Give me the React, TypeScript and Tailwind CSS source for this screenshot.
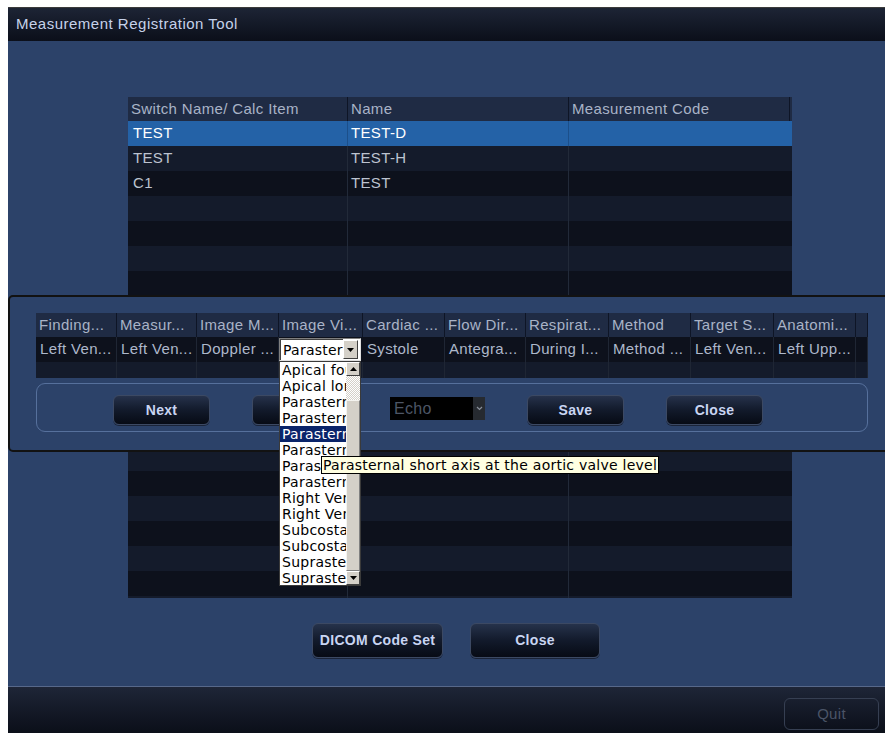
import React from "react";

const mainRows: string[][] = [
  ["TEST", "TEST-D", ""],
  ["TEST", "TEST-H", ""],
  ["C1", "TEST", ""],
];

const codeCols = [
  { w: 81, head: "Finding...", val: "Left Ven..." },
  { w: 80, head: "Measur...", val: "Left Ven..." },
  { w: 82, head: "Image M...", val: "Doppler ..." },
  { w: 84, head: "Image Vi...", val: "" },
  { w: 82, head: "Cardiac ...", val: "Systole" },
  { w: 81, head: "Flow Dir...", val: "Antegra..." },
  { w: 83, head: "Respirat...", val: "During I..." },
  { w: 82, head: "Method", val: "Method ..." },
  { w: 83, head: "Target S...", val: "Left Ven..." },
  { w: 82, head: "Anatomi...", val: "Left Upp..." },
  { w: 12, head: "", val: "" },
];

const views = [
  "Apical four chamber",
  "Apical long axis",
  "Parasternal long axis",
  "Parasternal long axis of right ventricular inflow",
  "Parasternal short axis at the aortic valve level",
  "Parasternal short axis at the mitral valve level",
  "Parasternal short axis at the papillary muscle level",
  "Parasternal short axis at the apical level",
  "Right Ventricular inflow",
  "Right Ventricular outflow",
  "Subcostal four chamber",
  "Subcostal short axis",
  "Suprasternal long axis",
  "Suprasternal short axis",
];

function DarkButton({ label, w, h }: { label: string; w: string; h: string }) {
  return (
    <div
      className={`${w} ${h} flex items-center justify-center rounded-[6px] border border-[#3c4963] bg-gradient-to-b from-[#26324b] via-[#121a2b] to-[#070b15] shadow-[0_1px_0_#1a2439] text-[14px] font-bold tracking-[0.3px] text-[#c9d5f2]`}
    >
      {label}
    </div>
  );
}

function ViewCombo() {
  return (
    <div className="relative h-[24px] w-[82px] mt-[1px]">
      {/* closed combo */}
      <div className="flex h-[23px] w-[82px] items-center border border-[#7f7f7f] border-r-[#e0e0e0] border-b-[#e0e0e0] bg-white">
        <div className="flex h-full flex-1 items-center overflow-hidden whitespace-nowrap border-l border-t border-[#404040] pl-[2px] font-['DejaVu_Sans',Verdana,sans-serif] text-[14px] tracking-[0.25px] text-black">
          Parasternal short axis
        </div>
        <div className="flex h-[19px] w-[15px] items-center justify-center border border-white border-r-[#404040] border-b-[#404040] bg-[#d4d0c8] mr-[2px]">
          <svg width="7" height="4" viewBox="0 0 7 4">
            <path d="M0 0h7L3.5 4z" fill="#000" />
          </svg>
        </div>
      </div>
      {/* open list */}
      <div className="absolute left-0 top-[23px] z-20 flex h-[225px] w-[82px] border border-[#3a3a3a] bg-white">
        <div className="flex w-[66px] flex-col overflow-hidden">
          {views.map((v, i) => (
            <div
              key={i}
              className={`h-[16px] whitespace-nowrap pl-[2px] font-['DejaVu_Sans',Verdana,sans-serif] text-[14px] leading-[16px] tracking-[0.25px] ${
                i === 4 ? "bg-[#0a246a] text-white" : "text-black"
              }`}
            >
              {v}
            </div>
          ))}
        </div>
        <div className="flex w-[14px] flex-col bg-[#d4d0c8]">
          <div className="flex h-[14px] items-center justify-center border border-white border-r-[#404040] border-b-[#404040] bg-[#d4d0c8]">
            <svg width="7" height="4" viewBox="0 0 7 4">
              <path d="M0 4h7L3.5 0z" fill="#000" />
            </svg>
          </div>
          <div className="h-[24px] bg-[repeating-conic-gradient(#d4d0c8_0_25%,#ffffff_0_50%)] bg-[length:2px_2px]" />
          <div className="flex-1 border border-[#f4f3ef] border-r-[#808080] border-b-[#808080] bg-[#d4d0c8]" />
          <div className="flex h-[14px] items-center justify-center border border-white border-r-[#404040] border-b-[#404040] bg-[#d4d0c8]">
            <svg width="7" height="4" viewBox="0 0 7 4">
              <path d="M0 0h7L3.5 4z" fill="#000" />
            </svg>
          </div>
        </div>
      </div>
    </div>
  );
}

export default function App() {
  return (
    <div className="relative h-[733px] w-[885px] overflow-hidden bg-white pl-[8px] pt-[7px] font-['Liberation_Sans',Arial,sans-serif]">
      <div className="flex h-[726px] w-[890px] flex-col border-t border-[#3b3b3b]">
        {/* title bar */}
        <div className="flex h-[33px] items-center bg-gradient-to-b from-[#1d2435] to-[#0b0f1a] pl-[8px] text-[15px] tracking-[0.5px] text-[#c6d2ea]">
          Measurement Registration Tool
        </div>

        {/* body */}
        <div className="flex h-[645px] flex-col bg-[#2c4269] pt-[56px]">
          {/* calc item table */}
          <div className="ml-[120px] flex h-[501px] w-[664px] flex-col overflow-hidden bg-[#0d111c] text-[15px] tracking-[0.35px]">
            <div className="grid h-[24px] shrink-0 grid-cols-[220px_221px_221px_2px] bg-[#1f2b44] text-[#a9b3c7]">
              <div className="flex items-center border-r border-[#0e1526] pl-[3px]">Switch Name/ Calc Item</div>
              <div className="flex items-center border-r border-[#0e1526] pl-[3px]">Name</div>
              <div className="flex items-center border-r border-[#0e1526] pl-[3px]">Measurement Code</div>
              <div />
            </div>
            {Array.from({ length: 20 }).map((_, i) => {
              const r = mainRows[i] ?? ["", "", ""];
              const sel = i === 0;
              const bg = sel ? "bg-[#2462a7] text-white" : i % 2 === 1 ? "bg-[#141b2b] text-[#bcc3d0]" : "bg-[#0d111c] text-[#bcc3d0]";
              return (
                <div key={i} className={`grid h-[25px] shrink-0 grid-cols-[220px_221px_221px_2px] ${bg}`}>
                  <div className={`flex items-center border-r pl-[5px] ${sel ? "border-[#1c4f8a]" : "border-[#222a39]"}`}>{r[0]}</div>
                  <div className={`flex items-center border-r pl-[3px] ${sel ? "border-[#1c4f8a]" : "border-[#222a39]"}`}>{r[1]}</div>
                  <div className={`flex items-center pl-[3px]`}>{r[2]}</div>
                  <div />
                </div>
              );
            })}
          </div>

          <div className="ml-[304px] mt-[25px] flex gap-[27px]">
            <DarkButton label="DICOM Code Set" w="w-[131px]" h="h-[35px]" />
            <DarkButton label="Close" w="w-[130px]" h="h-[35px]" />
          </div>
        </div>

        {/* status bar */}
        <div className="flex h-[47px] justify-start border-t border-[#57688a] bg-gradient-to-b from-[#1e2537] to-[#0b0f19] pl-[776px] pt-[11px]">
          <div className="flex h-[32px] w-[95px] items-center justify-center rounded-[6px] border border-[#363f52] text-[15px] tracking-[0.3px] text-[#4b5467]">
            Quit
          </div>
        </div>
      </div>

      {/* DICOM code dialog */}
      <div className="absolute left-[8px] top-[295px] z-10 h-[157px] w-[892px] rounded-[5px] border-2 border-[#121212] bg-[#2c4269] pl-[26px] pt-[16px]">
        <div className="flex w-[832px] flex-col text-[15px] tracking-[0.35px]">
          <div className="flex h-[24px] bg-[#1f2b44] text-[#a9b3c7]">
            {codeCols.map((c, i) => (
              <div
                key={i}
                style={{ width: c.w }}
                className="flex shrink-0 items-center overflow-hidden whitespace-nowrap border-r border-[#0e1526] pl-[3px]"
              >
                {c.head}
              </div>
            ))}
          </div>
          <div className="flex h-[25px] bg-[#0d111c] text-[#aeb8cb]">
            {codeCols.map((c, i) => (
              <div
                key={i}
                style={{ width: c.w }}
                className={`relative flex shrink-0 whitespace-nowrap ${i === 3 ? "items-start" : "items-center border-r border-[#1f2634] pl-[4px]"}`}
              >
                {i === 3 ? <ViewCombo /> : c.val}
              </div>
            ))}
          </div>
          <div className="flex h-[16px] bg-[#141b2b]">
            {codeCols.map((c, i) => (
              <div key={i} style={{ width: c.w }} className="shrink-0 border-r border-[#1f2634]" />
            ))}
          </div>
        </div>

        <div className="mt-[5px] flex h-[49px] w-[832px] items-start gap-[42px] rounded-[9px] border border-[#56709c] pl-[76px] pt-[11px]">
          <DarkButton label="Next" w="w-[97px]" h="h-[30px]" />
          <DarkButton label="" w="w-[96px]" h="h-[30px]" />
          <div className="mt-[2px] flex h-[23px] w-[95px]">
            <div className="flex w-[83px] items-center bg-black pl-[4px] text-[16px] tracking-[0.3px] text-[#4d5666]">Echo</div>
            <div className="flex w-[12px] items-center justify-center bg-[#262a30]">
              <svg width="7" height="5" viewBox="0 0 7 5">
                <path d="M1 1l2.5 2.5L6 1" stroke="#8a909a" strokeWidth="1.2" fill="none" />
              </svg>
            </div>
          </div>
          <DarkButton label="Save" w="w-[97px]" h="h-[30px]" />
          <DarkButton label="Close" w="w-[97px]" h="h-[30px]" />
        </div>
      </div>

      {/* hover tooltip */}
      <div className="absolute left-[321px] top-[456px] z-30 flex h-[18px] items-center border border-black bg-[#ffffe1] px-[1px] font-['DejaVu_Sans',Verdana,sans-serif] text-[14px] tracking-[0.25px] text-black">
        Parasternal short axis at the aortic valve level
      </div>
    </div>
  );
}
